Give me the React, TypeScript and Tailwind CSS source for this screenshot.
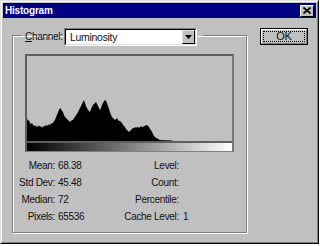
import React from "react";

const pts: [number, number][] = [
  [27, 119], [28, 122], [29, 121], [30, 124], [31, 125], [32, 124], [33, 126], [34, 127], [35, 126], [36, 128], [37, 127],
  [38, 128], [39, 126], [40, 128], [41, 127], [42, 129], [43, 127], [44, 128], [45, 126], [46, 127], [47, 126], [48, 127],
  [49, 125], [50, 126], [51, 125], [52, 124], [53, 124], [54, 122], [55, 121], [56, 118], [57, 116], [58, 113], [59, 111],
  [60, 109], [61, 110], [62, 112], [63, 113], [64, 116], [65, 118], [66, 119], [67, 120], [68, 121], [69, 122], [70, 123],
  [71, 122], [72, 121], [73, 121], [74, 119], [75, 118], [76, 116], [77, 115], [78, 113], [79, 111], [80, 109], [81, 107],
  [82, 105], [83, 103], [84, 101], [85, 104], [86, 107], [87, 109], [88, 111], [89, 112], [90, 113], [91, 110], [92, 108],
  [93, 106], [94, 105], [95, 104], [96, 103], [97, 105], [98, 107], [99, 109], [100, 111], [101, 109], [102, 106],
  [103, 104], [104, 102], [105, 101], [106, 102], [107, 104], [108, 107], [109, 110], [110, 113], [111, 116], [112, 118],
  [113, 119], [114, 120], [115, 121], [116, 120], [117, 119], [118, 121], [119, 122], [120, 122], [121, 123], [122, 124],
  [123, 126], [124, 127], [125, 128], [126, 130], [127, 131], [128, 132], [129, 133], [130, 132], [131, 131], [132, 130],
  [133, 129], [134, 129], [135, 128], [136, 129], [137, 128], [138, 128], [139, 129], [140, 128], [141, 127], [142, 128],
  [143, 128], [144, 127], [145, 127], [146, 126], [147, 126], [148, 127], [149, 128], [150, 130], [151, 131], [152, 133],
  [153, 135], [154, 137], [155, 138], [156, 139], [157, 139], [158, 140], [160, 141], [165, 141.3], [172, 141.5], [173, 142],
];

function Histogram() {
  const poly = [[27, 142], ...pts, [173, 142]].map((p) => p.join(",")).join(" ");
  return (
    <svg width={205} height={85} viewBox="27 57 205 85" className="block">
      <polygon points={poly} fill="#000" />
    </svg>
  );
}

function Row({ l1, v1, l2, v2 }: { l1: string; v1: string; l2: string; v2: string }) {
  return (
    <div className="flex h-[17px] items-center">
      <div className="w-[42px] text-right">{l1}</div>
      <div className="w-[52px] pl-[3px]">{v1}</div>
      <div className="w-[72px] text-right">{l2}</div>
      <div className="pl-[4px]">{v2}</div>
    </div>
  );
}

export default function App() {
  const font = {
    fontFamily: '"Liberation Sans", Arial, sans-serif',
  };
  return (
    <div className="w-[320px] h-[246px] bg-white text-[10px] tracking-[-0.3px] leading-none text-[#111]" style={font}>
      <div className="w-[319px] h-[244px] border border-t-[#dfdfdf] border-l-[#dfdfdf] border-r-black border-b-black">
        <div className="h-full border border-t-white border-l-white border-r-[#808080] border-b-[#808080] bg-[#c0c0c0] p-px flex flex-col">
          {/* Title bar */}
          <div className="h-[15px] bg-[#000080] flex items-center pl-[2px] pr-[2px]">
            <span className="text-white font-bold text-[10px] tracking-[-0.2px]">Histogram</span>
            <div className="ml-auto w-[14px] h-[12px] bg-[#c0c0c0] border border-t-white border-l-white border-r-black border-b-black flex items-center justify-center">
              <svg width="8" height="7" viewBox="0 0 8 7">
                <path d="M0.5 0.5 L7.5 6.5 M7.5 0.5 L0.5 6.5" stroke="#000" strokeWidth="1.6" />
              </svg>
            </div>
          </div>
          {/* Body */}
          <div className="flex items-start">
            <fieldset className="ml-[9px] mt-[10px] w-[235px] h-[205px] border border-[#808080] shadow-[inset_1px_1px_0_#fff,1px_1px_0_#fff] p-0 m-0">
              <legend className="ml-[9px] pl-[3px] pr-[6px] h-[14px]">
                <div className="flex items-center h-[18px]">
                  <span className="w-[39px]">
                    <span className="underline">C</span>hannel:
                  </span>
                  <div className="w-[133px] h-[18px] bg-white border border-t-[#808080] border-l-[#808080] border-r-white border-b-white">
                    <div className="h-full border border-t-black border-l-black border-r-[#dfdfdf] border-b-[#dfdfdf] flex items-center">
                      <span className="pl-[4px] text-[10.5px]">Luminosity</span>
                      <div className="ml-auto w-[13px] h-full bg-[#c0c0c0] border border-t-[#dfdfdf] border-l-[#dfdfdf] border-r-black border-b-black flex items-center justify-center">
                        <svg width="7" height="4" viewBox="0 0 7 4">
                          <path d="M0 0 H7 L3.5 4 Z" fill="#000" />
                        </svg>
                      </div>
                    </div>
                  </div>
                </div>
              </legend>
              <div className="pl-[12px] pt-[12px]">
                <div className="w-[209px] border-2 border-[#5f5f5f] border-b border-b-[#808080] border-r-[#777]">
                  <div className="h-[85px] bg-[#c0c0c0]">
                    <Histogram />
                  </div>
                  <div className="h-[2px] bg-[#5f5f5f]" />
                  <div className="h-[8px] bg-[linear-gradient(to_right,#000,#fff)]" />
                </div>
              </div>
              <div className="mt-[5px]">
                <Row l1="Mean:" v1="68.38" l2="Level:" v2="" />
                <Row l1="Std Dev:" v1="45.48" l2="Count:" v2="" />
                <Row l1="Median:" v1="72" l2="Percentile:" v2="" />
                <Row l1="Pixels:" v1="65536" l2="Cache Level:" v2="1" />
              </div>
            </fieldset>
            <div className="ml-[13px] mt-[10px] w-[48px] h-[17px] border border-black">
              <div className="h-full border border-t-white border-l-white border-r-[#808080] border-b-[#808080] p-[1px]">
                <div className="h-full border border-dotted border-black flex items-center justify-center text-[11px]">
                  OK
                </div>
              </div>
            </div>
          </div>
        </div>
      </div>
    </div>
  );
}
